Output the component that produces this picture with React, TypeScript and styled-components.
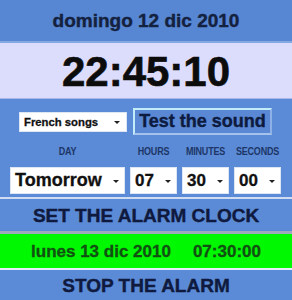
import React from "react";
import styled, { createGlobalStyle } from "styled-components";

const Global = createGlobalStyle`
  html, body { margin: 0; padding: 0; background: #ffffff; }
  body { font-family: "Liberation Sans", Arial, sans-serif; }
`;

const Page = styled.div`
  width: 292px;
  height: 300px;
  display: flex;
  flex-direction: column;
  font-family: "Liberation Sans", Arial, sans-serif;
  font-weight: bold;
  overflow: hidden;
`;

const Header = styled.div`
  height: 40px;
  background: #5786d3;
  border-bottom: 2px solid #86a8e2;
  color: #14223f;
  font-size: 19px;
  -webkit-text-stroke: 0.4px #14223f;
  display: flex;
  align-items: center;
  justify-content: center;
  padding-top: 1px;
  box-sizing: content-box;
`;

const Clock = styled.div`
  height: 56px;
  background: #dcdcfc;
  border-bottom: 1px solid #a9b6ea;
  color: #0c0c0c;
  font-size: 42px;
  -webkit-text-stroke: 0.6px #0c0c0c;
  display: flex;
  align-items: center;
  justify-content: center;
  padding-top: 2px;
  box-sizing: border-box;
`;

const Panel = styled.div`
  height: 98px;
  box-sizing: border-box;
  background: #5b8bd6;
  padding: 9px 0 0 0;
  display: flex;
  flex-direction: column;
`;

const TopRow = styled.div`
  display: flex;
  align-items: center;
  gap: 6px;
  padding-left: 19px;
`;

const SelectBox = styled.div<{ $w: number; $h: number; $size: number; $padR?: number }>`
  width: ${(p) => p.$w}px;
  height: ${(p) => p.$h}px;
  box-sizing: border-box;
  background: #ffffff;
  border: 1px solid #dde6f4;
  display: flex;
  align-items: center;
  justify-content: space-between;
  padding: 0 ${(p) => p.$padR ?? 6}px 0 4px;
  font-size: ${(p) => p.$size}px;
  color: #111111;
  -webkit-text-stroke: 0.3px #111111;
`;

const Arrow = styled.span`
  width: 0;
  height: 0;
  border-left: 3px solid transparent;
  border-right: 3px solid transparent;
  border-top: 3px solid #222;
  margin-top: 1px;
`;

const TestButton = styled.div`
  width: 139px;
  height: 27px;
  box-sizing: border-box;
  background: #5a88d4;
  border: 2px solid;
  border-color: #c3ecf9 #8db0e6 #a3c2ec #c3ecf9;
  color: #0d1b40;
  font-size: 18px;
  -webkit-text-stroke: 0.4px #0d1b40;
  display: flex;
  align-items: center;
  justify-content: center;
`;

const Grid = styled.div`
  display: grid;
  grid-template-columns: 115px 47px 47px 47px;
  column-gap: 5px;
  padding-left: 10px;
`;

const Labels = styled(Grid)`
  margin-top: 12px;
  height: 10px;
  align-items: center;
`;

const Label = styled.div`
  font-size: 9px;
  color: #1d3668;
  text-align: center;
  white-space: nowrap;
  letter-spacing: -0.2px;
  transform: scaleY(1.15);
`;

const Selects = styled(Grid)`
  margin-top: 10px;
`;

const LightLine = styled.div<{ $c: string; $h: number }>`
  height: ${(p) => p.$h}px;
  background: ${(p) => p.$c};
`;

const BigButton = styled.div<{ $h: number }>`
  height: ${(p) => p.$h}px;
  background: #5b8bd6;
  color: #0f1a3e;
  font-size: 19px;
  -webkit-text-stroke: 0.4px #0f1a3e;
  display: flex;
  align-items: center;
  justify-content: center;
  padding-top: 1px;
  box-sizing: border-box;
`;

const AlarmBar = styled.div`
  height: 34px;
  background: #00f800;
  color: #125012;
  font-size: 17px;
  -webkit-text-stroke: 0.3px #125012;
  display: flex;
  align-items: center;
  justify-content: center;
  gap: 22px;
  padding-top: 1px;
  box-sizing: border-box;
`;

export default function App() {
  return (
    <>
      <Global />
      <Page>
        <Header>domingo 12 dic 2010</Header>
        <Clock>22:45:10</Clock>
        <Panel>
          <TopRow>
            <SelectBox $w={108} $h={20} $size={11.3} $padR={6}>
              <span>French songs</span>
              <Arrow />
            </SelectBox>
            <TestButton>Test the sound</TestButton>
          </TopRow>
          <Labels>
            <Label>DAY</Label>
            <Label>HOURS</Label>
            <Label>MINUTES</Label>
            <Label>SECONDS</Label>
          </Labels>
          <Selects>
            <SelectBox $w={115} $h={27} $size={18} $padR={5}>
              <span>Tomorrow</span>
              <Arrow />
            </SelectBox>
            <SelectBox $w={47} $h={27} $size={17} $padR={5}>
              <span>07</span>
              <Arrow />
            </SelectBox>
            <SelectBox $w={47} $h={27} $size={17} $padR={5}>
              <span>30</span>
              <Arrow />
            </SelectBox>
            <SelectBox $w={47} $h={27} $size={17} $padR={5}>
              <span>00</span>
              <Arrow />
            </SelectBox>
          </Selects>
        </Panel>
        <LightLine $c="#cfdcf2" $h={2} />
        <BigButton $h={32}>SET THE ALARM CLOCK</BigButton>
        <LightLine $c="#9fa9bd" $h={3} />
        <AlarmBar>
          <span>lunes 13 dic 2010</span>
          <span>07:30:00</span>
        </AlarmBar>
        <LightLine $c="#e6eefc" $h={2} />
        <BigButton $h={30}>STOP THE ALARM</BigButton>
      </Page>
    </>
  );
}
